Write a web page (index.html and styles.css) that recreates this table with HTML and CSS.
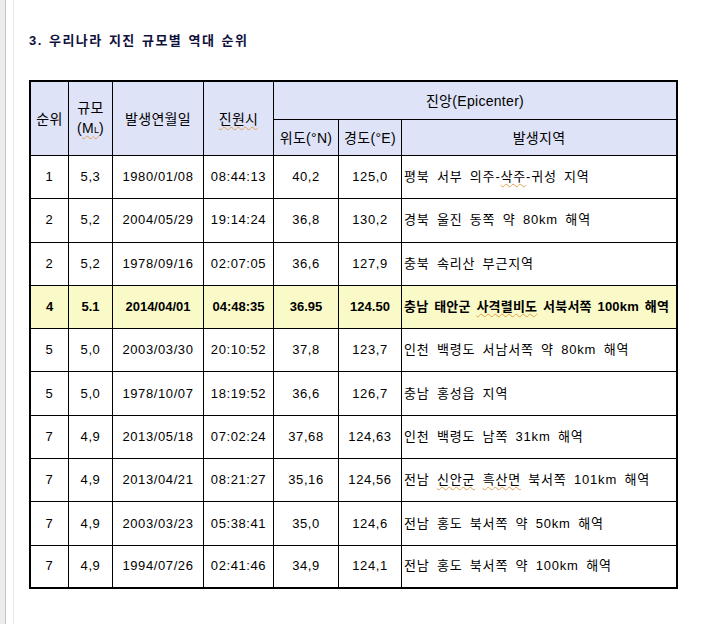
FILE: index.html
```html
<!DOCTYPE html>
<html lang="ko">
<head>
<meta charset="utf-8">
<title>우리나라 지진 규모별 역대 순위</title>
<link rel="stylesheet" href="styles.css">
</head>
<body>
<div class="page">
  <div class="rail"></div>
  <div class="doc">
    <h3 class="title">3. 우리나라 지진 규모별 역대 순위</h3>
    <table class="quakes">
      <colgroup>
        <col class="c-rank"><col class="c-mag"><col class="c-date"><col class="c-time"><col class="c-lat"><col class="c-lon"><col class="c-area">
      </colgroup>
      <thead>
        <tr class="h1">
          <th rowspan="2">순위</th>
          <th rowspan="2" class="two">규모<br>(<span class="spell">M<small>L</small></span>)</th>
          <th rowspan="2">발생연월일</th>
          <th rowspan="2"><span class="spell">진원시</span></th>
          <th colspan="3" class="last">진앙(Epicenter)</th>
        </tr>
        <tr class="h2">
          <th>위도(°N)</th>
          <th>경도(°E)</th>
          <th class="last">발생지역</th>
        </tr>
      </thead>
      <tbody>
        <tr><td>1</td><td>5,3</td><td>1980/01/08</td><td>08:44:13</td><td>40,2</td><td>125,0</td><td class="area">평북 서부 의주-<span class="spell">삭주</span>-귀성 지역</td></tr>
        <tr><td>2</td><td>5,2</td><td>2004/05/29</td><td>19:14:24</td><td>36,8</td><td>130,2</td><td class="area">경북 울진 동쪽 약 80km 해역</td></tr>
        <tr><td>2</td><td>5,2</td><td>1978/09/16</td><td>02:07:05</td><td>36,6</td><td>127,9</td><td class="area">충북 속리산 부근지역</td></tr>
        <tr class="hl"><td>4</td><td>5.1</td><td>2014/04/01</td><td>04:48:35</td><td>36.95</td><td>124.50</td><td class="area">충남 태안군 <span class="spell">사격렬비도</span> 서북서쪽 100km 해역</td></tr>
        <tr><td>5</td><td>5,0</td><td>2003/03/30</td><td>20:10:52</td><td>37,8</td><td>123,7</td><td class="area">인천 백령도 서남서쪽 약 80km 해역</td></tr>
        <tr><td>5</td><td>5,0</td><td>1978/10/07</td><td>18:19:52</td><td>36,6</td><td>126,7</td><td class="area">충남 홍성읍 지역</td></tr>
        <tr><td>7</td><td>4,9</td><td>2013/05/18</td><td>07:02:24</td><td>37,68</td><td>124,63</td><td class="area">인천 백령도 남쪽 31km 해역</td></tr>
        <tr><td>7</td><td>4,9</td><td>2013/04/21</td><td>08:21:27</td><td>35,16</td><td>124,56</td><td class="area">전남 <span class="spell">신안군</span> <span class="spell">흑산면</span> 북서쪽 101km 해역</td></tr>
        <tr><td>7</td><td>4,9</td><td>2003/03/23</td><td>05:38:41</td><td>35,0</td><td>124,6</td><td class="area">전남 홍도 북서쪽 약 50km 해역</td></tr>
        <tr><td>7</td><td>4,9</td><td>1994/07/26</td><td>02:41:46</td><td>34,9</td><td>124,1</td><td class="area">전남 홍도 북서쪽 약 100km 해역</td></tr>
      </tbody>
    </table>
  </div>
</div>
</body>
</html>
```

FILE: styles.css
```css
html, body {
  margin: 0;
  padding: 0;
  background: #ffffff;
}

.page {
  display: flex;
  min-height: 624px;
}

.rail {
  width: 5px;
  flex: none;
  background: #ececec;
  border-right: 1px solid #c4c4c4;
}

.doc {
  margin-left: 7px;
  border-left: 1px solid #e8e8e8;
  padding: 33px 0 0 15px;
  flex: 1;
}

.title {
  margin: 0 0 31px 0;
  height: 16px;
  line-height: 16px;
  font-family: "Liberation Sans", "Noto Sans CJK KR", sans-serif;
  font-size: 13px;
  font-weight: bold;
  letter-spacing: 1.5px;
  word-spacing: 1px;
  color: #10103c;
}

.quakes {
  border-collapse: separate;
  border-spacing: 0;
  border: 2px solid #000;
  table-layout: fixed;
  width: 649px;
  font-family: "Liberation Sans", "Noto Sans CJK KR", sans-serif;
  font-size: 13px;
  letter-spacing: 0.6px;
  color: #000;
}

.c-rank { width: 38px; }
.c-mag { width: 44px; }
.c-date { width: 91px; }
.c-time { width: 70px; }
.c-lat { width: 65px; }
.c-lon { width: 63px; }
.c-area { width: 274px; }

.quakes th,
.quakes td {
  box-sizing: border-box;
  padding: 0;
  border-right: 1px solid #000;
  border-bottom: 1px solid #000;
  text-align: center;
  vertical-align: middle;
  white-space: nowrap;
  overflow: hidden;
}

.quakes th {
  background: #dfe3f7;
  font-weight: normal;
  font-size: 14px;
  line-height: 20px;
  letter-spacing: 0.3px;
}

.quakes .last,
.quakes td.area {
  border-right: none;
}

.quakes tr.h1 th { height: 38px; }
.quakes tr.h2 th { height: 36px; }

.quakes th.two small {
  font-size: 9px;
  letter-spacing: 0;
}

.quakes td {
  height: 43.3px;
  line-height: 16px;
}

.quakes tbody tr:last-child td {
  border-bottom: none;
  height: 41px;
}

.quakes td.area {
  text-align: left;
  padding-left: 2px;
  letter-spacing: 0.8px;
  word-spacing: 3px;
}

.quakes tr.hl td {
  background: #fafac8;
  font-weight: bold;
  letter-spacing: 0;
}

.quakes tr.hl td.area {
  letter-spacing: 0.2px;
  word-spacing: 2px;
}

.spell {
  text-decoration: underline wavy #e0a050;
  text-decoration-thickness: 1px;
  text-underline-offset: 2px;
}
```
